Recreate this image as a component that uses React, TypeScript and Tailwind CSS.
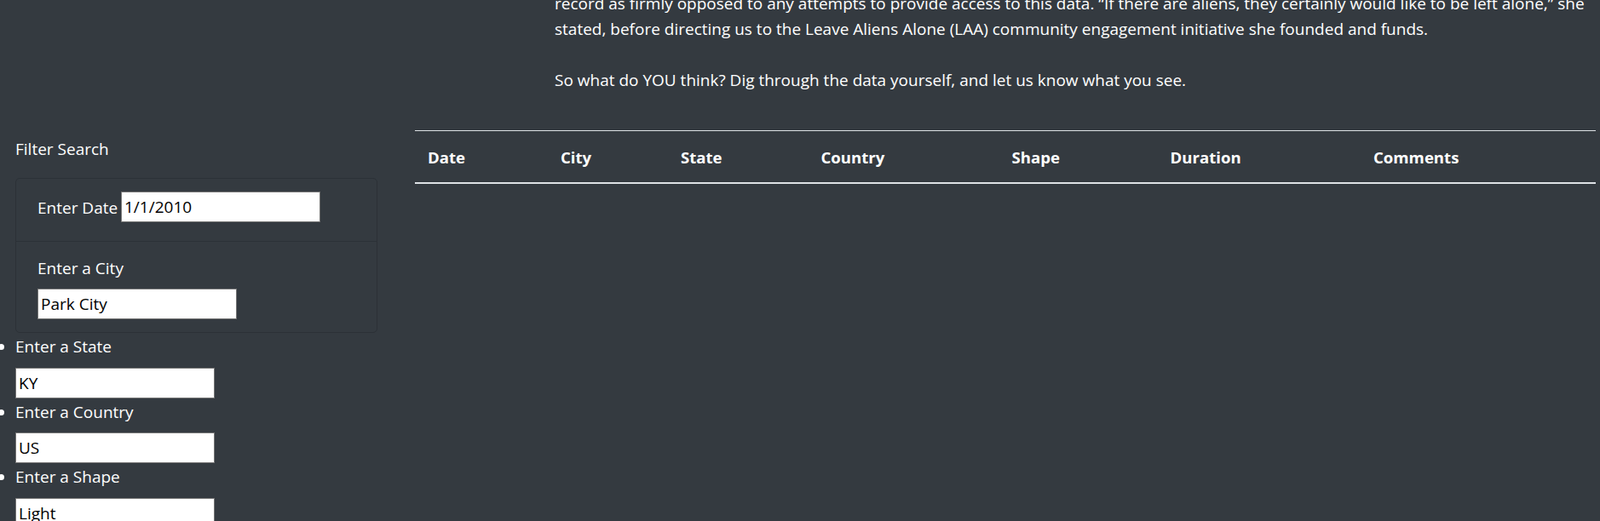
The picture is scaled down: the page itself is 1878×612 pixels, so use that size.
import React from "react";

const cols: { label: string; w: string }[] = [
  { label: "Date", w: "w-[156px]" },
  { label: "City", w: "w-[141px]" },
  { label: "State", w: "w-[164.5px]" },
  { label: "Country", w: "w-[224px]" },
  { label: "Shape", w: "w-[186px]" },
  { label: "Duration", w: "w-[238.5px]" },
  { label: "Comments", w: "w-[276px]" },
];

const inputCls =
  "block w-[234px] h-[36px] bg-white border border-[#767676] pl-[3px] text-black text-[19px] leading-[30px] font-['Open_Sans',sans-serif] outline-none";

export default function App() {
  return (
    <div className="w-[1878px] h-[612px] overflow-hidden bg-[#343a40] text-white font-['Open_Sans',sans-serif] text-[19px] leading-[30px]">
      {/* Intro text (scrolled) */}
      <div className="pl-[651px] mt-[-11px] whitespace-nowrap">
        <p>
          record as firmly opposed to any attempts to provide access to this data. “If there are aliens, they certainly would like to be left alone,” she
          <br />
          stated, before directing us to the Leave Aliens Alone (LAA) community engagement initiative she founded and funds.
          <br />
          <br />
          So what do YOU think? Dig through the data yourself, and let us know what you see.
        </p>
      </div>

      <div className="flex mt-[44px]">
        {/* Sidebar */}
        <aside className="w-[487px] pl-[18px] pt-[7px]">
          <div className="mb-[19px]">Filter Search</div>
          <div className="w-[425px] border border-[#2c3137] rounded-[5px]">
            <div className="px-[25px] pt-[15px] pb-[15px] border-b border-[#2c3137]">
              <div className="h-[43px] flex items-start whitespace-nowrap">
                <label className="w-[98px] shrink-0 pt-[4px]">Enter Date</label>
                <input className={inputCls} defaultValue="1/1/2010" />
              </div>
            </div>
            <div className="px-[25px] pt-[15px] pb-[15px]">
              <label className="block pt-[1px] h-[31px] mb-[9px]">Enter a City</label>
              <input className={inputCls} defaultValue="Park City" />
            </div>
          </div>
          <ul className="list-disc list-outside pl-0">
            <li>
              <label className="block pt-[1px] h-[31px] mb-[9.5px]">Enter a State</label>
              <input className={inputCls} defaultValue="KY" />
            </li>
            <li>
              <label className="block pt-[1px] h-[31px] mb-[9.5px]">Enter a Country</label>
              <input className={inputCls} defaultValue="US" />
            </li>
            <li>
              <label className="block pt-[1px] h-[31px] mb-[9.5px]">Enter a Shape</label>
              <input className={inputCls} defaultValue="Light" />
            </li>
            <li>
              <label className="block pt-[1px] h-[31px] mb-[9.5px]">Enter a Duration</label>
              <input className={inputCls} defaultValue="" />
            </li>
          </ul>
        </aside>

        {/* Table */}
        <div className="w-[1386px]">
          <table className="table-fixed w-[1386px] border-collapse">
            <thead>
              <tr className="border-t border-[#dee2e6] border-b-2 border-b-[#dee2e6]">
                {cols.map((c) => (
                  <th
                    key={c.label}
                    className={`${c.w} text-left px-[15px] pt-[16px] pb-[14px] font-bold text-[18.6px] leading-[30px] font-['Open_Sans',sans-serif]`}
                  >
                    {c.label}
                  </th>
                ))}
              </tr>
            </thead>
            <tbody></tbody>
          </table>
        </div>
      </div>
    </div>
  );
}
